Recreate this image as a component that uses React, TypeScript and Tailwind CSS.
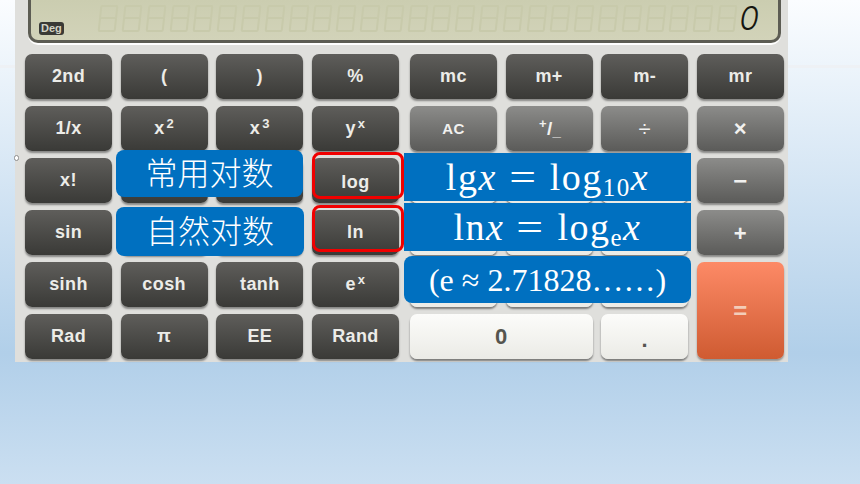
const SANS = "font-['Liberation_Sans',Arial,sans-serif]";
const SERIF = "font-['Liberation_Serif','Times_New_Roman',serif]";

type Tone = "dark" | "gray" | "white" | "orange";

const TONES: Record<Tone, string> = {
  dark: "bg-gradient-to-b from-[#5f5e5b] to-[#3a3a37] text-[#ecece8] shadow-[0_2px_2px_rgba(0,0,0,0.4)]",
  gray: "bg-gradient-to-b from-[#8c8c8a] to-[#5b5b59] text-[#f1f1ef] shadow-[0_2px_2px_rgba(0,0,0,0.4)]",
  white: "bg-gradient-to-b from-[#fcfcfa] to-[#ebebe6] text-[#55554f] shadow-[0_2px_2px_rgba(0,0,0,0.45)]",
  orange: "bg-gradient-to-b from-[#fd8a66] to-[#cf5b31] text-[#f3cdb9] shadow-[0_2px_2px_rgba(0,0,0,0.35)]",
};

function Key({
  children,
  tone = "dark",
  className = "",
}: {
  children?: React.ReactNode;
  tone?: Tone;
  className?: string;
}) {
  return (
    <div
      className={`flex items-center justify-center rounded-[7px] font-bold leading-none tracking-[0.4px] ${TONES[tone]} ${className || "pb-px text-[18px]"}`}
    >
      {children}
    </div>
  );
}

function Sup({ children }: { children: React.ReactNode }) {
  return <sup className="relative -top-[5px] ml-[2px] align-baseline text-[13px] font-bold leading-none">{children}</sup>;
}

function GhostDigit() {
  return (
    <div className="relative h-[27px] w-[18px] shrink-0 -skew-x-6 rounded-[2px] border-2 border-[#c8caab]">
      <div className="absolute inset-x-0 top-[10px] h-[2px] bg-[#c8caab]" />
    </div>
  );
}

function Display() {
  return (
    <div className="ml-[13px] h-[45px] w-[753px] rounded-b-[10px] border-b-2 border-white">
      <div className="relative flex h-[43px] items-start justify-end rounded-b-[10px] border-x-[3px] border-b-[3px] border-x-[#5c5c53] border-b-[#5c5c53] bg-gradient-to-b from-[#cbcdb0] to-[#d2d3b9] pr-[19px]">
        <span className="absolute bottom-[5px] left-[8px] rounded-[3px] bg-[#3a3a36] px-[2px] text-[11px] font-bold leading-[13px] text-[#d3d3c6]">
          Deg
        </span>
        <div className="mt-[5px] flex gap-[5.8px]">
          {Array.from({ length: 27 }, (_, i) => (
            <GhostDigit key={i} />
          ))}
        </div>
        <span className="ml-[3px] mt-[2px] w-[20px] text-center font-['Inter',sans-serif] text-[32px] font-light italic leading-[34px] text-[#151510]">
          0
        </span>
      </div>
    </div>
  );
}

function Banner({ className, children }: { className: string; children: React.ReactNode }) {
  return (
    <div className={`absolute flex items-center justify-center bg-[#0070c0] text-white ${className}`}>{children}</div>
  );
}

function RedBox({ className }: { className: string }) {
  return <div className={`absolute h-[47px] w-[92px] rounded-[8px] border-[3px] border-[#f00000] ${className}`} />;
}

function Eq() {
  return <span className="mx-[15px] inline-block scale-x-125">=</span>;
}

export default function App() {
  return (
    <div className={`relative h-[484px] w-[860px] overflow-hidden bg-gradient-to-b from-[#fbfdff] via-[#b1cfe9] via-[73%] to-[#cbdff1] ${SANS}`}>
      <div className="absolute inset-x-0 top-[65px] h-[3px] bg-[#eef1f5]" />

      <div className="relative ml-[15px] h-[362px] w-[773px] bg-[#dfdfdc]">
        <Display />

        <div className="ml-[10px] mt-[9px] flex gap-[11px]">
          <div className="grid grid-cols-[repeat(4,87px)] grid-rows-[repeat(6,45px)] gap-x-[8.67px] gap-y-[7px]">
            <Key>2nd</Key>
            <Key>(</Key>
            <Key>)</Key>
            <Key>%</Key>
            <Key>1/x</Key>
            <Key>x<Sup>2</Sup></Key>
            <Key>x<Sup>3</Sup></Key>
            <Key>y<Sup>x</Sup></Key>
            <Key>x!</Key>
            <Key />
            <Key />
            <Key className="pt-[3px] text-[18px]">log</Key>
            <Key>sin</Key>
            <Key />
            <Key />
            <Key>ln</Key>
            <Key>sinh</Key>
            <Key>cosh</Key>
            <Key>tanh</Key>
            <Key>e<Sup>x</Sup></Key>
            <Key>Rad</Key>
            <Key>π</Key>
            <Key>EE</Key>
            <Key>Rand</Key>
          </div>

          <div className="grid grid-cols-[repeat(4,87px)] grid-rows-[repeat(6,45px)] gap-x-[8.67px] gap-y-[7px]">
            <Key>mc</Key>
            <Key>m+</Key>
            <Key>m-</Key>
            <Key>mr</Key>
            <Key tone="gray" className="text-[15px]">AC</Key>
            <Key tone="gray" className="text-[19px]"><Sup>+</Sup>/<span className="relative top-[2px] text-[15px]">_</span></Key>
            <Key tone="gray" className="text-[22px] font-normal">÷</Key>
            <Key tone="gray" className="text-[22px]">×</Key>
            <Key tone="white" />
            <Key tone="white" />
            <Key tone="white" />
            <Key tone="gray" className="text-[24px]">−</Key>
            <Key tone="white" />
            <Key tone="white" />
            <Key tone="white" />
            <Key tone="gray" className="pt-[2px] text-[22px]">+</Key>
            <Key tone="white" />
            <Key tone="white" />
            <Key tone="white" />
            <Key tone="orange" className="row-span-2 text-[24px]">=</Key>
            <Key tone="white" className="col-span-2 text-[22px]">0</Key>
            <Key tone="white" className="pt-[6px] text-[22px]">.</Key>
          </div>
        </div>

        <span className="absolute -left-[1px] top-[155px] h-[6px] w-[5px] rounded-full border border-[#8d8d8d] bg-white" />
      </div>

      <Banner className="left-[116px] top-[150px] h-[47px] w-[187px] rounded-[8px] pb-[6px] font-['Noto_Sans_CJK_SC',sans-serif] text-[32px] font-light">
        常用对数
      </Banner>
      <Banner className="left-[116px] top-[207px] h-[49px] w-[188px] rounded-[8px] pb-[6px] font-['Noto_Sans_CJK_SC',sans-serif] text-[32px] font-light">
        自然对数
      </Banner>

      <RedBox className="left-[312px] top-[152px]" />
      <RedBox className="left-[312px] top-[205px]" />

      <Banner className={`left-[404px] top-[153px] h-[48px] w-[287px] text-[38px] ${SERIF}`}>
        <span className="tracking-[1.5px]">lg<i>x</i><Eq />log<sub className="text-[25px] leading-none">10</sub><i>x</i></span>
      </Banner>
      <Banner className={`left-[404px] top-[203px] h-[48px] w-[287px] text-[38px] ${SERIF}`}>
        <span className="tracking-[1.5px]">ln<i>x</i><Eq />log<sub className="text-[25px] leading-none">e</sub><i>x</i></span>
      </Banner>
      <Banner className={`left-[404px] top-[256px] h-[47px] w-[287px] rounded-[8px] text-[32px] ${SERIF}`}>
        (e ≈ 2.71828……)
      </Banner>
    </div>
  );
}
